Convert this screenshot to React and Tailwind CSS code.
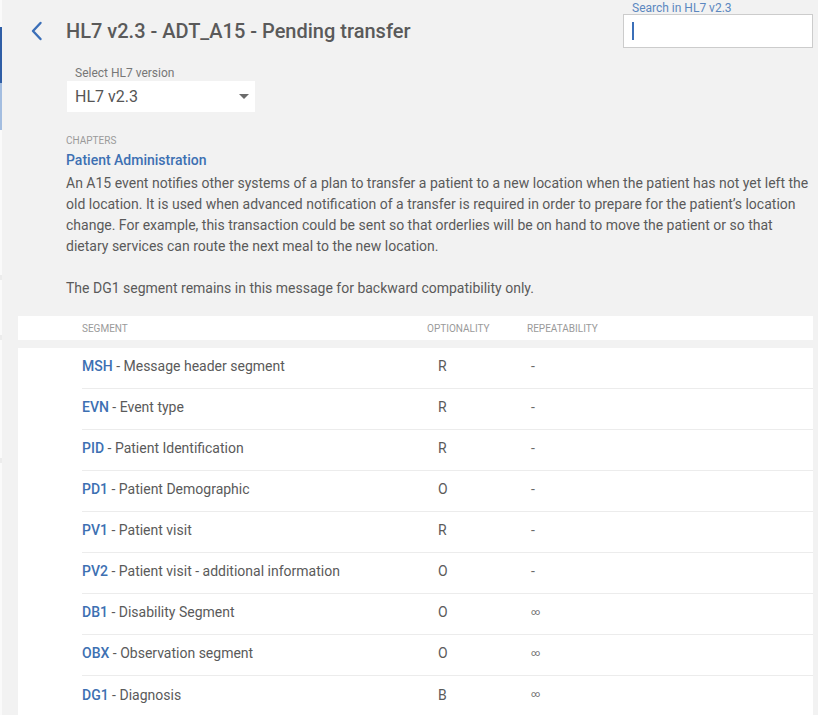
import React from "react";

const rows = [
  ["MSH", "Message header segment", "R", "-"],
  ["EVN", "Event type", "R", "-"],
  ["PID", "Patient Identification", "R", "-"],
  ["PD1", "Patient Demographic", "O", "-"],
  ["PV1", "Patient visit", "R", "-"],
  ["PV2", "Patient visit - additional information", "O", "-"],
  ["DB1", "Disability Segment", "O", "∞"],
  ["OBX", "Observation segment", "O", "∞"],
  ["DG1", "Diagnosis", "B", "∞"],
];

export default function App() {
  return (
    <div className="min-h-[715px] bg-[#f2f2f2] flex font-['Roboto',sans-serif] text-[#5a5a5a]">
      <div className="w-[2px] flex flex-col bg-[#fafafa]">
        <div className="h-[27px]" />
        <div className="h-[56px] bg-[#2f5ea6]" />
        <div className="h-[47px] bg-[#a3bde0]" />
        <div className="h-[145px]" />
        <div className="h-[5px] bg-[#ececec]" />
        <div className="h-[55px]" />
        <div className="h-[5px] bg-[#ececec]" />
        <div className="h-[118px]" />
        <div className="h-[5px] bg-[#ececec]" />
      </div>
      <div className="flex-1 pr-[5px] min-w-0">
        {/* header */}
        <div className="flex justify-between h-[48px]">
          <div className="flex items-center pt-[19px] pl-[28px] h-[43px]">
            <svg width="14" height="20" viewBox="0 0 14 20" className="shrink-0">
              <path d="M10.5 2 L3 10 L10.5 18" fill="none" stroke="#3b6fb8" strokeWidth="2.4" strokeLinecap="round" strokeLinejoin="round" />
            </svg>
            <h1 className="ml-[22px] text-[20px] leading-[24px] font-medium text-[#5a5a5a]">
              HL7 v2.3 - ADT_A15 - Pending transfer
            </h1>
          </div>
          <div className="w-[190px]">
            <div className="text-[12px] leading-[12px] pt-[2px] text-[#5b87c0] pl-[9px]">Search in HL7 v2.3</div>
            <div className="h-[34px] bg-white border border-[#cccccc] flex items-center pl-[8px]">
              <div className="w-[1.5px] h-[18px] bg-[#3b6fb8]" />
            </div>
          </div>
        </div>

        {/* select */}
        <div className="mt-[18px] ml-[65px]">
          <div className="text-[12px] leading-[15px] text-[#777] pl-[8px]">Select HL7 version</div>
          <div className="w-[188px] h-[31px] bg-white flex items-center justify-between pl-[8px] pr-[6px]">
            <span className="text-[16px] text-[#555]">HL7 v2.3</span>
            <svg width="10" height="5" viewBox="0 0 10 5">
              <path d="M0 0 L10 0 L5 5 Z" fill="#6b6b6b" />
            </svg>
          </div>
        </div>

        {/* chapters */}
        <div className="ml-[64px] mt-[23px]">
          <div className="text-[10px] leading-[12px] text-[#9a9a9a] uppercase">Chapters</div>
          <div className="text-[14px] leading-[20px] mt-[3px] font-medium text-[#3d70b2]">Patient Administration</div>
          <div className="text-[14px] leading-[21px] mt-[3px] text-[#5a5a5a]">
            <p>
              An A15 event notifies other systems of a plan to transfer a patient to a new location when the patient has not yet left the old location. It is used when advanced notification of a transfer is required in order to prepare for the patient’s location change. For example, this transaction could be sent so that orderlies will be on hand to move the patient or so that dietary services can route the next meal to the new location.
            </p>
            <p className="mt-[21px]">The DG1 segment remains in this message for backward compatibility only.</p>
          </div>
        </div>

        {/* table header */}
        <div className="ml-[16px] mt-[17px] bg-white h-[24px] flex items-center text-[10px] text-[#9a9a9a] uppercase">
          <div className="pl-[64px] w-[409px]">Segment</div>
          <div className="w-[100px]">Optionality</div>
          <div>Repeatability</div>
        </div>

        {/* table body */}
        <div className="ml-[16px] mt-[8px] bg-white pl-[64px]">
          {rows.map(([code, desc, opt, rep], i) => (
            <div key={code} className={"h-[41px] pb-[3px] flex items-center text-[14px] " + (i < rows.length - 1 ? "border-b border-[#ececec]" : "")}>
              <div className="w-[345px]">
                <span className="font-medium text-[#3d70b2]">{code}</span>
                <span className="text-[#5a5a5a]"> - {desc}</span>
              </div>
              <div className="w-[100px] pl-[11px] text-[#5a5a5a]">{opt}</div>
              <div className={"pl-[4px] text-[#6a6a6a] " + (rep === "∞" ? "text-[9px]" : "text-[14px]")}>{rep}</div>
            </div>
          ))}
        </div>
      </div>
    </div>
  );
}
